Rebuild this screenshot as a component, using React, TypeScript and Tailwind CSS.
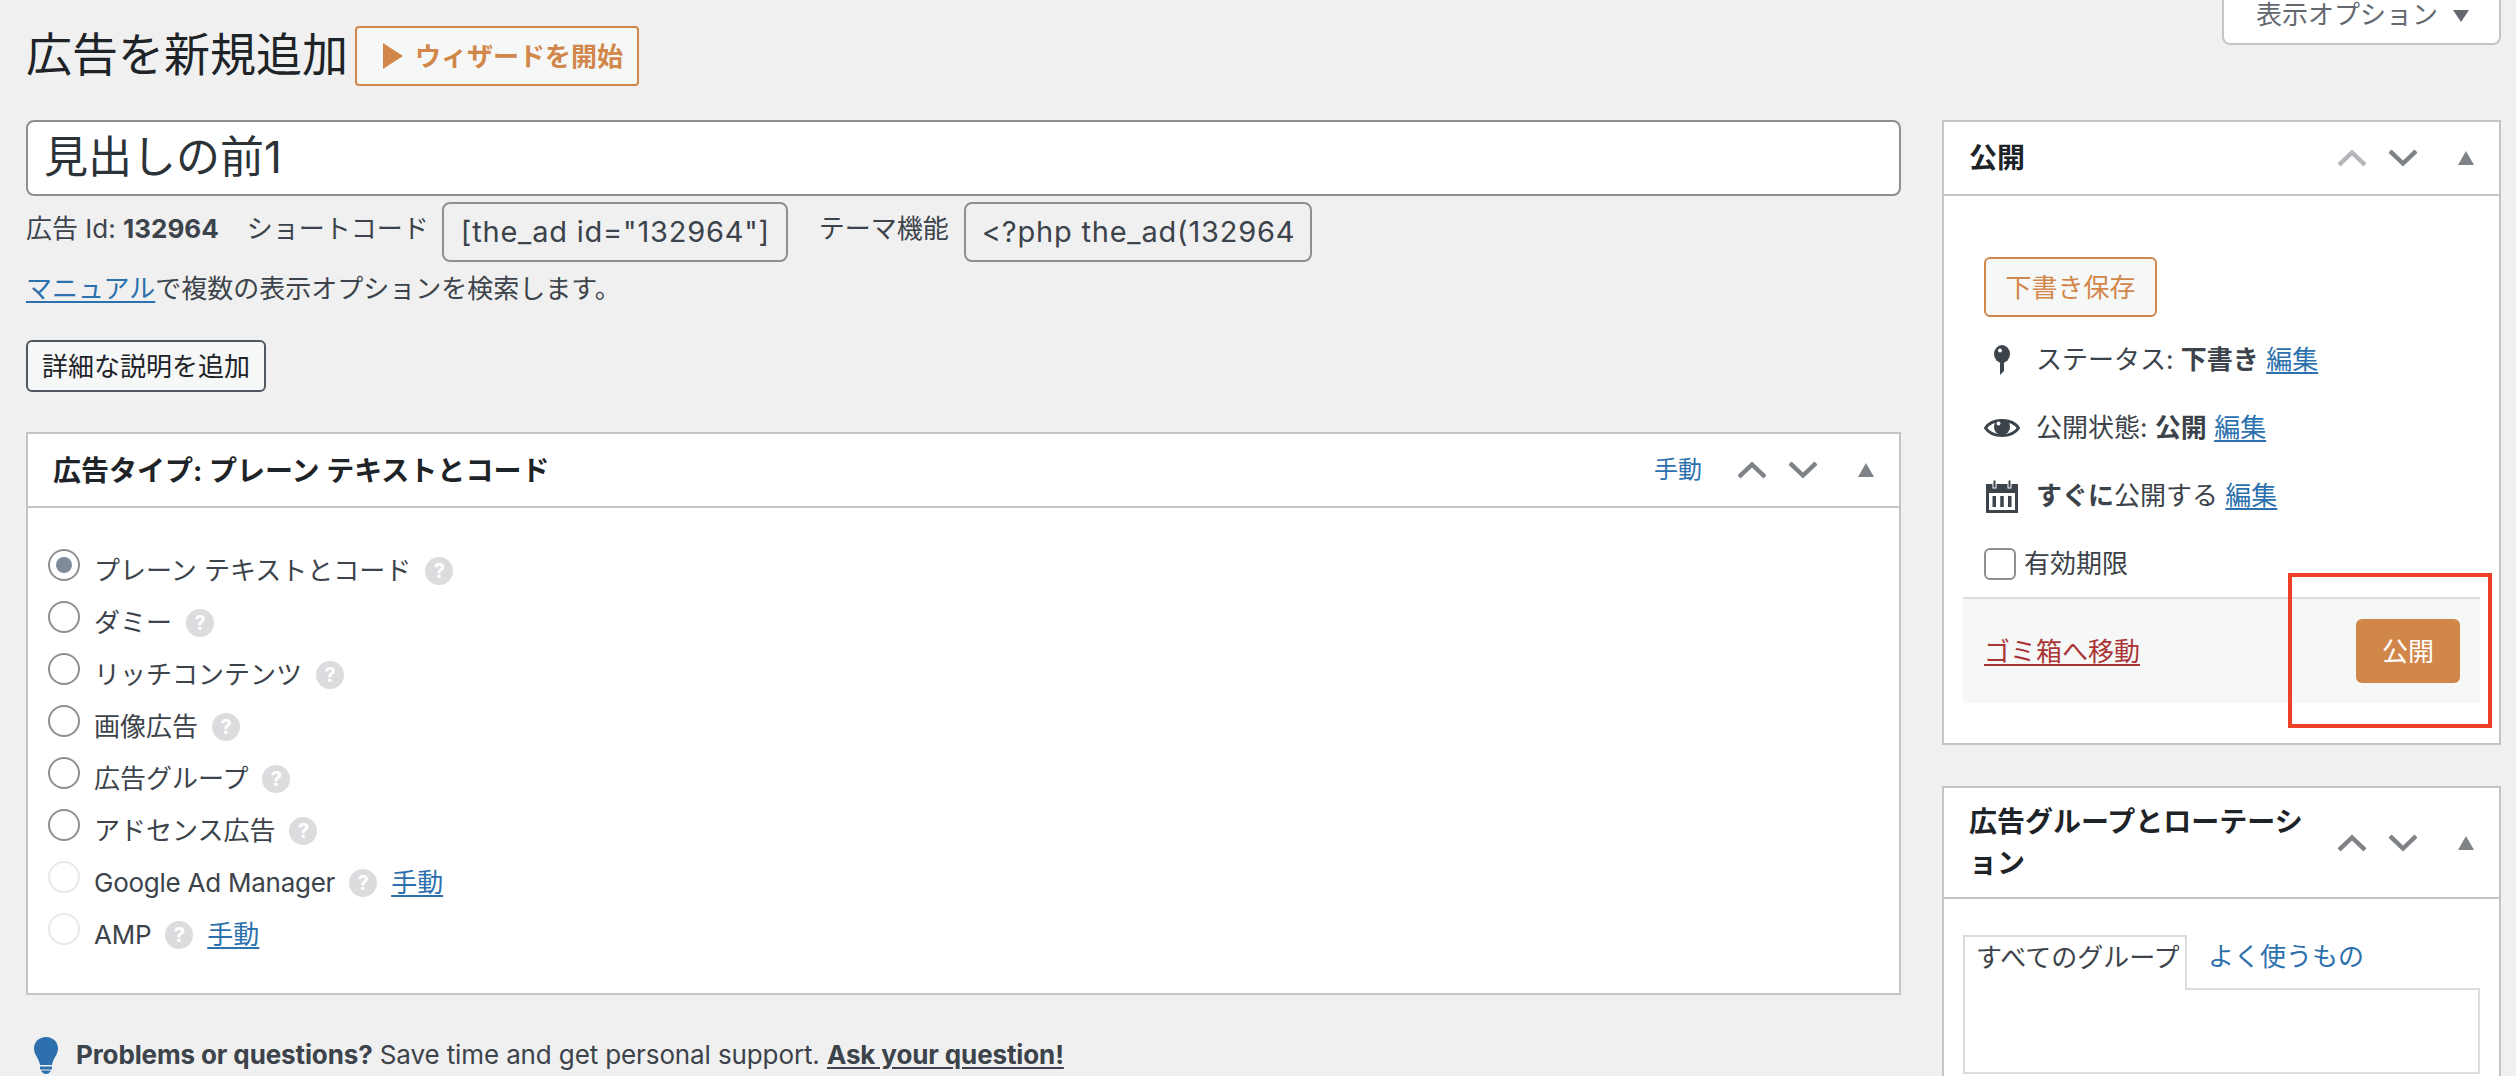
const FONT = "font-['Inter','Noto_Sans_CJK_JP',sans-serif]"

function Chevron({ up, light }: { up?: boolean; light?: boolean }) {
  return (
    <svg viewBox="0 0 28 18" className="w-[28px] h-[18px]">
      <polyline
        points={up ? "1,16 14,3.500 27,16" : "1,2 14,14.500 27,2"}
        fill="none"
        stroke={light ? "#b4b6ba" : "#7f8287"}
        strokeWidth="4.5"
      />
    </svg>
  )
}

function Triangle() {
  return (
    <svg viewBox="0 0 16 14" className="w-[16px] h-[14px]">
      <polygon points="8,0 16,14 0,14" fill="#7f8287" />
    </svg>
  )
}

function BoxControls({ light }: { light?: boolean }) {
  return (
    <div className="flex items-center">
      <Chevron up light={light} />
      <div className="ml-[23px]">
        <Chevron />
      </div>
      <div className="ml-[41px] mr-[25px]">
        <Triangle />
      </div>
    </div>
  )
}

function Help() {
  return (
    <span className="w-[28px] h-[28px] rounded-full bg-[#dcdcde] text-white text-[20px] leading-[28px] font-bold text-center inline-block">
      ?
    </span>
  )
}

function EditLink({ children = "編集" }: { children?: string }) {
  return <a className="text-[#2c71ad] underline underline-offset-[3px]">{children}</a>
}

function TypeRow({
  label,
  checked,
  disabled,
  manual,
}: {
  label: string
  checked?: boolean
  disabled?: boolean
  manual?: boolean
}) {
  return (
    <div className="h-[52px] flex items-center">
      <span
        className={`w-[32px] h-[32px] -mt-[2px] rounded-full border-2 bg-white flex items-center justify-center ${
          disabled ? "border-[#e8e8ea]" : "border-[#8c8f94]"
        }`}
      >
        {checked && <span className="w-[16px] h-[16px] rounded-full bg-[#7e8c99]" />}
      </span>
      <div className="ml-[14px] mt-[10px] flex items-center gap-[14px] text-[26px] leading-[36px] text-[#3c434a]">
        <span className={disabled ? "tracking-[-0.25px]" : ""}>{label}</span>
        <Help />
        {manual && <EditLink>手動</EditLink>}
      </div>
    </div>
  )
}

function StatusRow({ icon, children }: { icon: React.ReactNode; children: React.ReactNode }) {
  return (
    <div className="h-[68px] flex items-center">
      <div className="w-[36px] flex justify-center">{icon}</div>
      <div className="ml-[16px] text-[26px] leading-[36px] text-[#3c434a]">{children}</div>
    </div>
  )
}

function PinIcon() {
  return (
    <svg viewBox="0 0 16 30" className="w-[16px] h-[30px]">
      <ellipse cx="8" cy="9" rx="8" ry="9" fill="#3c434a" />
      <circle cx="6" cy="5.500" r="2" fill="#fff" />
      <polygon points="6,14 10,14 10,26 6,30" fill="#3c434a" />
    </svg>
  )
}

function EyeIcon() {
  return (
    <svg viewBox="0 0 36 24" className="w-[36px] h-[24px]">
      <path d="M1.500 12 C8 2 28 2 34.500 12 C28 22 8 22 1.500 12 Z" fill="none" stroke="#3c434a" strokeWidth="3" />
      <circle cx="18" cy="11" r="8" fill="#3c434a" />
      <circle cx="14.500" cy="7.500" r="2" fill="#fff" />
    </svg>
  )
}

function CalendarIcon() {
  return (
    <svg viewBox="0 0 32 33" className="w-[32px] h-[33px]">
      <rect x="0" y="4" width="32" height="29" fill="#3c434a" />
      <rect x="3" y="13" width="26" height="17" fill="#fff" />
      <rect x="7" y="0" width="3" height="8" fill="#3c434a" stroke="#fff" strokeWidth="1" />
      <rect x="22" y="0" width="3" height="8" fill="#3c434a" stroke="#fff" strokeWidth="1" />
      <rect x="6.500" y="16" width="3.500" height="11" fill="#3c434a" />
      <rect x="14.250" y="16" width="3.500" height="11" fill="#3c434a" />
      <rect x="22" y="16" width="3.500" height="11" fill="#3c434a" />
    </svg>
  )
}

function BulbIcon() {
  return (
    <svg viewBox="0 0 24 37" className="w-[24px] h-[37px]">
      <path
        d="M12 0 C5 0 0 5 0 11.500 C0 18 5 21 6 28 L18 28 C19 21 24 18 24 11.500 C24 5 19 0 12 0 Z"
        fill="#2c71ad"
      />
      <rect x="6" y="29.500" width="12" height="3" fill="#2c71ad" />
      <path d="M7 33.500 L17 33.500 C16 36 14 37 12 37 C10 37 8 36 7 33.500 Z" fill="#2c71ad" />
    </svg>
  )
}

export default function App() {
  return (
    <div className={`${FONT} relative w-[2516px] h-[1076px] overflow-hidden bg-[#f0f0f1] text-[#3c434a]`}>
      <header className="h-[120px] flex items-start justify-between pl-[26px] pr-[15px]">
        <div className="flex items-start mt-[26px]">
          <h1 className="text-[46px] leading-[56px] text-[#1d2327] font-normal">広告を新規追加</h1>
          <button className="ml-[7px] h-[60px] w-[284px] border-2 border-[#d1874a] rounded-[4px] bg-[#f6f7f7] text-[#d1874a] text-[26px] font-bold flex items-center pl-[26px]">
            <svg viewBox="0 0 20 26" className="w-[20px] h-[26px] mr-[12px]">
              <polygon points="0,0 20,13 0,26" fill="#d1874a" />
            </svg>
            ウィザードを開始
          </button>
        </div>
        <div className="w-[279px] h-[45px] bg-white border-2 border-t-0 border-[#c3c4c7] rounded-b-[8px] flex items-start pl-[32px] pt-[1px] text-[26px] leading-[28px] text-[#646970]">
          <span>表示オプション</span>
          <svg viewBox="0 0 16 12" className="w-[16px] h-[12px] ml-[15px] mt-[9px]">
            <polygon points="0,0 16,0 8,12" fill="#646970" />
          </svg>
        </div>
      </header>

      <div className="flex items-start pl-[26px] gap-[41px]">
        <main className="w-[1875px] shrink-0">
          <div className="h-[76px] bg-white border-2 border-[#8c8f94] rounded-[8px] flex items-center pl-[16px] pb-[2px] text-[44px] text-[#2c3338]">
            見出しの前1
          </div>

          <div className="h-[60px] mt-[6px] flex items-start text-[26px] leading-[54px]">
            <span>
              広告 Id: <b>132964</b>
            </span>
            <span className="ml-[28px]">ショートコード</span>
            <div className="ml-[13px] w-[346px] h-[60px] bg-[#f0f0f1] border-2 border-[#8c8f94] rounded-[8px] pl-[17px] text-[29px] tracking-[0.8px] leading-[56px] whitespace-nowrap">
              [the_ad id="132964"]
            </div>
            <span className="ml-[31px]">テーマ機能</span>
            <div className="ml-[15px] w-[348px] h-[60px] bg-[#f0f0f1] border-2 border-[#8c8f94] rounded-[8px] pl-[16px] text-[29px] tracking-[0.8px] leading-[56px] whitespace-nowrap">
              &lt;?php the_ad(132964
            </div>
          </div>

          <p className="mt-[9px] text-[26px] leading-[36px]">
            <EditLink>マニュアル</EditLink>で複数の表示オプションを検索します。
          </p>

          <button className="block mt-[33px] h-[52px] w-[240px] border-2 border-[#50575e] rounded-[6px] bg-[#f6f7f7] text-[26px] text-[#1d2327]">
            詳細な説明を追加
          </button>

          <section className="mt-[40px] h-[563px] bg-white border-2 border-[#c3c4c7]">
            <div className="h-[74px] border-b-2 border-[#c3c4c7] flex items-center justify-between pl-[25px]">
              <h2 className="mt-[2px] text-[28px] font-bold text-[#1d2327]">広告タイプ: プレーン テキストとコード</h2>
              <div className="flex items-center">
                <a className="text-[24px] text-[#2c71ad] mr-[36px]">手動</a>
                <BoxControls />
              </div>
            </div>
            <div className="pl-[20px] pt-[32px]">
              <TypeRow label="プレーン テキストとコード" checked />
              <TypeRow label="ダミー" />
              <TypeRow label="リッチコンテンツ" />
              <TypeRow label="画像広告" />
              <TypeRow label="広告グループ" />
              <TypeRow label="アドセンス広告" />
              <TypeRow label="Google Ad Manager" disabled manual />
              <TypeRow label="AMP" disabled manual />
            </div>
          </section>

          <div className="mt-[41px] ml-[8px] flex items-center text-[26px] leading-[38px] tracking-[-0.12px]">
            <BulbIcon />
            <p className="ml-[18px]">
              <b>Problems or questions?</b> Save time and get personal support.{" "}
              <b className="underline underline-offset-[3px]">Ask your question!</b>
            </p>
          </div>
        </main>

        <aside className="w-[559px] shrink-0">
          <section className="h-[625px] bg-white border-2 border-[#c3c4c7]">
            <div className="h-[74px] border-b-2 border-[#c3c4c7] flex items-center justify-between pl-[25px]">
              <h2 className="text-[28px] font-bold text-[#1d2327]">公開</h2>
              <BoxControls light />
            </div>
            <div className="px-[40px] pt-[61px]">
              <button className="h-[60px] w-[173px] border-2 border-[#d1874a] rounded-[6px] bg-[#f6f7f7] text-[#d1874a] text-[26px]">
                下書き保存
              </button>
              <div className="mt-[9px]">
                <StatusRow icon={<PinIcon />}>
                  ステータス: <b>下書き</b> <EditLink />
                </StatusRow>
                <StatusRow icon={<EyeIcon />}>
                  公開状態: <b>公開</b> <EditLink />
                </StatusRow>
                <StatusRow icon={<CalendarIcon />}>
                  <b>すぐに</b>公開する <EditLink />
                </StatusRow>
                <div className="h-[67px] flex items-center">
                  <span className="w-[32px] h-[32px] rounded-[6px] border-2 border-[#8c8f94] bg-white" />
                  <span className="ml-[8px] text-[26px]">有効期限</span>
                </div>
              </div>
            </div>
            <div className="mx-[19px] h-[106px] bg-[#f6f7f7] border-t-2 border-[#dcdcde] flex items-center justify-between pl-[21px] pr-[20px]">
              <a className="text-[26px] text-[#ab3536] underline underline-offset-[3px]">ゴミ箱へ移動</a>
              <button className="w-[104px] h-[64px] rounded-[6px] bg-[#d1874a] text-white text-[26px]">公開</button>
            </div>
          </section>

          <section className="mt-[41px] h-[400px] bg-white border-2 border-[#c3c4c7]">
            <div className="h-[111px] border-b-2 border-[#c3c4c7] flex items-center justify-between pl-[25px]">
              <h2 className="w-[340px] text-[28px] leading-[41px] font-bold text-[#1d2327]">広告グループとローテーション</h2>
              <BoxControls />
            </div>
            <div className="px-[19px] pt-[36px]">
              <div className="flex items-end h-[55px] text-[26px]">
                <div className="w-[224px] h-[55px] border-2 border-b-0 border-[#dcdcde] pl-[11px] leading-[42px] relative z-10 bg-white">
                  すべてのグループ
                </div>
                <a className="ml-[21px] h-[55px] leading-[44px] text-[#2c71ad]">よく使うもの</a>
              </div>
              <div className="h-[86px] -mt-[2px] border-2 border-[#dcdcde]" />
            </div>
          </section>
        </aside>
      </div>

      <div className="absolute left-[2288px] top-[573px] w-[204px] h-[155px] border-4 border-[#ec4126]" />
    </div>
  )
}
